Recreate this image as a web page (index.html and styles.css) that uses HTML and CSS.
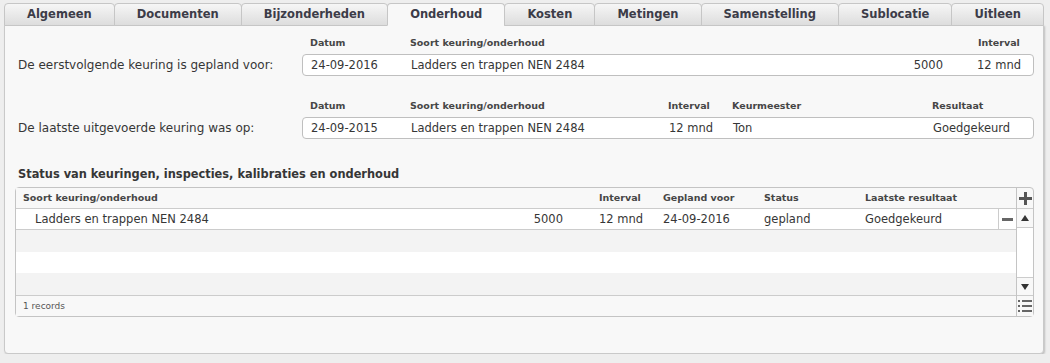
FILE: index.html
```html
<!DOCTYPE html>
<html lang="nl">
<head>
    <meta charset="UTF-8">
    <meta name="viewport" content="width=device-width, initial-scale=1.0">
    <title>Onderhoud</title>
    <link rel="stylesheet" href="styles.css">
</head>
<body>
    <div class="tabs">
        <div class="tab">Algemeen</div>
        <div class="tab">Documenten</div>
        <div class="tab">Bijzonderheden</div>
        <div class="tab active">Onderhoud</div>
        <div class="tab">Kosten</div>
        <div class="tab">Metingen</div>
        <div class="tab">Samenstelling</div>
        <div class="tab">Sublocatie</div>
        <div class="tab">Uitleen</div>
    </div>
    <div class="panel">
        <div class="form-row">
            <div class="label">De eerstvolgende keuring is gepland voor:</div>
            <div class="field">
                <div class="cols next heads">
                    <span>Datum</span>
                    <span>Soort keuring/onderhoud</span>
                    <span></span>
                    <span>Interval</span>
                </div>
                <div class="cols next box">
                    <span>24-09-2016</span>
                    <span>Ladders en trappen NEN 2484</span>
                    <span class="num">5000</span>
                    <span>12 mnd</span>
                </div>
            </div>
        </div>
        <div class="form-row second">
            <div class="label">De laatste uitgevoerde keuring was op:</div>
            <div class="field">
                <div class="cols last heads">
                    <span>Datum</span>
                    <span>Soort keuring/onderhoud</span>
                    <span>Interval</span>
                    <span>Keurmeester</span>
                    <span>Resultaat</span>
                </div>
                <div class="cols last box">
                    <span>24-09-2015</span>
                    <span>Ladders en trappen NEN 2484</span>
                    <span>12 mnd</span>
                    <span>Ton</span>
                    <span>Goedgekeurd</span>
                </div>
            </div>
        </div>

        <h3 class="title">Status van keuringen, inspecties, kalibraties en onderhoud</h3>

        <div class="grid">
            <div class="grid-main">
                <div class="row head">
                    <span class="name">Soort keuring/onderhoud</span>
                    <span></span>
                    <span>Interval</span>
                    <span>Gepland voor</span>
                    <span>Status</span>
                    <span>Laatste resultaat</span>
                    <span class="act-empty"></span>
                </div>
                <div class="row data">
                    <span class="name">Ladders en trappen NEN 2484</span>
                    <span class="num">5000</span>
                    <span>12 mnd</span>
                    <span>24-09-2016</span>
                    <span>gepland</span>
                    <span>Goedgekeurd</span>
                    <span class="act">
                        <svg width="11" height="3" viewBox="0 0 11 3"><rect width="11" height="3" fill="#666"/></svg>
                    </span>
                </div>
                <div class="row empty odd"></div>
                <div class="row empty"></div>
                <div class="row empty odd"></div>
                <div class="footer">1 records</div>
            </div>
            <div class="grid-side">
                <div class="side-cell plus">
                    <svg width="13" height="13" viewBox="0 0 13 13"><path d="M5 0h3v5h5v3H8v5H5V8H0V5h5z" fill="#555"/></svg>
                </div>
                <div class="side-cell up">
                    <svg width="8" height="6" viewBox="0 0 8 6"><path d="M4 0L8 6H0z" fill="#333"/></svg>
                </div>
                <div class="track"></div>
                <div class="side-cell down">
                    <svg width="8" height="6" viewBox="0 0 8 6"><path d="M0 0h8L4 6z" fill="#333"/></svg>
                </div>
                <div class="side-cell list">
                    <svg width="14" height="12" viewBox="0 0 14 12">
                        <rect x="0" y="0" width="2" height="2" fill="#666"/>
                        <rect x="4" y="0" width="10" height="2" fill="#666"/>
                        <rect x="0" y="5" width="2" height="2" fill="#666"/>
                        <rect x="4" y="5" width="10" height="2" fill="#666"/>
                        <rect x="0" y="10" width="2" height="2" fill="#666"/>
                        <rect x="4" y="10" width="10" height="2" fill="#666"/>
                    </svg>
                </div>
            </div>
        </div>
    </div>
</body>
</html>
```

FILE: styles.css
```css
body {
    margin: 0;
    padding: 3px 6px 0 4px;
    background-color: #eeeeee;
    font-family: "DejaVu Sans", Verdana, sans-serif;
    font-size: 11.5px;
    color: #363636;
}
.tabs {
    display: flex;
    width: 1040px;
    position: relative;
    z-index: 1;
    margin-bottom: -1px;
}
.tab {
    flex: 1 1 auto;
    height: 21px;
    line-height: 21px;
    text-align: center;
    font-weight: bold;
    color: #3c3c48;
    background: linear-gradient(#f6f6f6, #dddddd);
    border: 1px solid #c6c6c6;
    border-radius: 4px 4px 0 0;
    margin-left: -1px;
}
.tab:first-child {
    margin-left: 0;
}
.tab.active {
    background: #f8f8f8;
    border-bottom-color: #f8f8f8;
}
.panel {
    width: 1019px;
    padding: 10px 9px 36px 10px;
    background-color: #f8f8f8;
    border: 1px solid #c9c9c9;
    border-radius: 0 0 4px 4px;
    box-shadow: 1px 1px 2px rgba(0, 0, 0, 0.2);
}
.form-row {
    display: flex;
    align-items: flex-end;
}
.form-row.second {
    margin-top: 23px;
}
.label {
    flex-shrink: 0;
    width: 284px;
    padding-left: 3px;
    line-height: 22px;
    font-size: 12px;
    white-space: nowrap;
}
.field {
    flex: 1;
    min-width: 0;
}
.cols {
    display: grid;
}
.cols.next {
    grid-template-columns: 100px 1fr 90px 64px;
}
.cols.last {
    grid-template-columns: 100px 258px 64px 200px 109px;
}
.cols span {
    padding-left: 8px;
    white-space: nowrap;
}
.cols .num {
    text-align: right;
    padding-right: 26px;
}
.heads {
    font-size: 9.5px;
    font-weight: bold;
    color: #464646;
    line-height: 14px;
    margin-bottom: 4px;
}
.box {
    height: 20px;
    line-height: 20px;
    background-color: white;
    border: 1px solid #bfbfbf;
    border-radius: 4px;
}
.title {
    margin: 27px 0 5px;
    padding-left: 3px;
    font-size: 11.4px;
    line-height: 16px;
    color: #363636;
}
.grid {
    display: flex;
    border: 1px solid #c4c4c4;
    border-radius: 4px;
}
.grid-main {
    flex: 1;
}
.row {
    display: grid;
    grid-template-columns: 463px 112px 64px 101px 101px 141px 18px;
    height: 21px;
    line-height: 20px;
}
.row span {
    padding-left: 8px;
    white-space: nowrap;
}
.row .name {
    padding-left: 7px;
}
.row .num {
    text-align: right;
    padding-right: 28px;
}
.head {
    font-size: 9.5px;
    font-weight: bold;
    color: #464646;
    background-color: #f8f8f8;
    border-bottom: 1px solid #cccccc;
    height: 20px;
}
.data {
    background-color: white;
    border-bottom: 1px solid #cccccc;
    height: 20px;
}
.data .name {
    padding-left: 19px;
}
.row .act {
    padding: 0;
    border-left: 1px solid #cccccc;
    display: flex;
    align-items: center;
    justify-content: center;
}
.empty {
    background-color: white;
}
.empty.odd {
    background-color: #f3f3f3;
    height: 22px;
}
.footer {
    height: 20px;
    line-height: 21px;
    border-top: 1px solid #cccccc;
    padding-left: 7px;
    font-size: 9px;
    color: #555555;
    background-color: #f8f8f8;
}
.grid-side {
    width: 17px;
    border-left: 1px solid #c4c4c4;
    display: flex;
    flex-direction: column;
}
.side-cell {
    display: flex;
    align-items: center;
    justify-content: center;
}
.plus {
    height: 20px;
    border-bottom: 1px solid #cccccc;
}
.up {
    height: 18px;
    border-bottom: 1px solid #cccccc;
}
.track {
    flex: 1;
    background-color: white;
}
.down {
    height: 17px;
    border-top: 1px solid #cccccc;
}
.list {
    height: 20px;
    border-top: 1px solid #cccccc;
    background-color: #f8f8f8;
}
```
